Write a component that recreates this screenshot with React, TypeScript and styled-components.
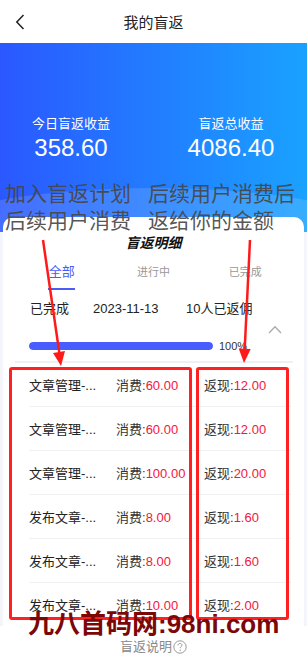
import React from "react";
import styled, { createGlobalStyle } from "styled-components";

const GlobalStyle = createGlobalStyle`
  html, body {
    margin: 0;
    padding: 0;
    background: #ffffff;
  }
  body {
    font-family: "Liberation Sans", "Noto Sans CJK SC", sans-serif;
    color: #222;
  }
`;

const Page = styled.div`
  position: relative;
  width: 307px;
  min-height: 661px;
  overflow: hidden;
  background: #ffffff;
`;

const NavBar = styled.div`
  height: 43px;
  display: flex;
  align-items: center;
  background: #ffffff;
`;

const BackButton = styled.div`
  width: 40px;
  display: flex;
  justify-content: center;
  align-items: center;
`;

const NavTitle = styled.div`
  flex: 1;
  text-align: center;
  font-size: 15px;
  color: #222;
`;

const NavSpacer = styled.div`
  width: 40px;
`;

const Hero = styled.div`
  position: relative;
  height: 189px;
  padding-top: 72px;
  box-sizing: border-box;
  background: linear-gradient(90deg, #2b58ff 0%, #2180ff 55%, #1aa2ff 100%);
  overflow: hidden;

  &::after {
    content: "";
    position: absolute;
    left: -25%;
    right: -25%;
    bottom: -52px;
    height: 96px;
    border-radius: 50%;
    background: rgba(255, 255, 255, 0.13);
  }
`;

const StatRow = styled.div`
  display: flex;
  justify-content: center;
  gap: 40px;
  padding-right: 5px;
`;

const Stat = styled.div`
  width: 120px;
  display: flex;
  flex-direction: column;
  align-items: center;
  color: #ffffff;
`;

const StatLabel = styled.div`
  font-size: 13px;
  line-height: 18px;
`;

const StatValue = styled.div`
  font-size: 24px;
  line-height: 30px;
`;

const CardWrap = styled.div`
  background: #f3f5fb;
  padding: 0 3px;
`;

const Card = styled.div`
  position: relative;
  z-index: 1;
  margin-top: -15px;
  background: #ffffff;
  border-radius: 10px 10px 0 0;
  padding-top: 16px;
`;

const CardTitle = styled.div`
  text-align: center;
  font-size: 14px;
  line-height: 20px;
  font-weight: bold;
  font-style: italic;
  color: #111;
`;

const Tabs = styled.div`
  margin-top: 9px;
  padding: 0 13px;
  display: grid;
  grid-template-columns: repeat(3, 1fr);
`;

const Tab = styled.div<{ $active?: boolean }>`
  display: flex;
  flex-direction: column;
  align-items: center;
  font-size: ${(p) => (p.$active ? "13px" : "11px")};
  line-height: 20px;
  color: ${(p) => (p.$active ? "#4b5cf6" : "#999")};

  &::after {
    content: "";
    margin-top: 6px;
    width: 27px;
    height: 2px;
    background: ${(p) => (p.$active ? "#4b5cf6" : "transparent")};
  }
`;

const InfoRow = styled.div`
  margin-top: 9px;
  display: grid;
  grid-template-columns: 63px 93px 1fr;
  padding-left: 27px;
  font-size: 13px;
  line-height: 20px;
  color: #222;
`;

const ToggleRow = styled.div`
  margin-top: 3px;
  height: 14px;
  display: flex;
  justify-content: flex-end;
  align-items: center;
  padding-right: 22px;
`;

const ProgressRow = styled.div`
  margin-top: 2px;
  height: 16px;
  display: flex;
  align-items: center;
  gap: 6px;
  padding-left: 26px;
`;

const ProgressTrack = styled.div`
  width: 184px;
  height: 8px;
  border-radius: 4px;
  background: #e6e8f5;
  overflow: hidden;
`;

const ProgressFill = styled.div`
  height: 100%;
  border-radius: 4px;
  background: #4a5cff;
`;

const ProgressText = styled.div`
  font-size: 11px;
  color: #333;
`;

const Divider = styled.div`
  margin: 7px 11px 0 12px;
  height: 2px;
  background: #eef0f5;
`;

const List = styled.div`
  padding-bottom: 0;
`;

const Row = styled.div`
  height: 43px;
  margin: 0 13px 0 26px;
  display: grid;
  grid-template-columns: 87px 88px 1fr;
  align-items: center;
  font-size: 13px;
  color: #222;
  border-bottom: 1px solid #f1f1f3;

  &:last-child {
    border-bottom: none;
  }
`;

const Name = styled.span`
  white-space: nowrap;
`;

const Money = styled.span`
  white-space: nowrap;
  color: #333;
`;

const Amount = styled.span`
  color: #f5143c;
`;

const Footer = styled.div`
  padding-top: 11px;
  display: flex;
  justify-content: center;
  align-items: center;
  gap: 1px;
  font-size: 13px;
  line-height: 20px;
  color: #888;
`;

/* --- annotation layer that sits on top of the screenshot --- */

const NoteBox = styled.div<{ $left: number; $width: number }>`
  position: absolute;
  top: 367px;
  left: ${(p) => p.$left}px;
  width: ${(p) => p.$width}px;
  height: 253px;
  box-sizing: border-box;
  border: 3px solid #ff2020;
  border-radius: 3px;
  pointer-events: none;
  z-index: 5;
`;

const NoteText = styled.div<{ $left: number }>`
  position: absolute;
  top: 180px;
  left: ${(p) => p.$left}px;
  font-size: 21px;
  line-height: 27px;
  color: rgba(70, 70, 70, 0.92);
  white-space: nowrap;
  pointer-events: none;
  z-index: 5;
`;

const ArrowLayer = styled.svg`
  position: absolute;
  inset: 0;
  pointer-events: none;
  z-index: 6;
`;

const Watermark = styled.div`
  position: absolute;
  top: 608px;
  left: 28px;
  font-size: 26px;
  line-height: 32px;
  font-weight: bold;
  color: #7a0808;
  white-space: nowrap;
  pointer-events: none;
  z-index: 7;
`;

const records = [
  { name: "文章管理-...", spend: "60.00", back: "12.00" },
  { name: "文章管理-...", spend: "60.00", back: "12.00" },
  { name: "文章管理-...", spend: "100.00", back: "20.00" },
  { name: "发布文章-...", spend: "8.00", back: "1.60" },
  { name: "发布文章-...", spend: "8.00", back: "1.60" },
  { name: "发布文章-...", spend: "10.00", back: "2.00" },
];

const App: React.FC = () => {
  const progress = 100;

  return (
    <Page>
      <GlobalStyle />
      <NavBar>
        <BackButton>
          <svg width="10" height="16" viewBox="0 0 10 16">
            <path d="M8.5 1 L1.8 8 L8.5 15" fill="none" stroke="#222" strokeWidth="1.5" />
          </svg>
        </BackButton>
        <NavTitle>我的盲返</NavTitle>
        <NavSpacer />
      </NavBar>

      <Hero>
        <StatRow>
          <Stat>
            <StatLabel>今日盲返收益</StatLabel>
            <StatValue>358.60</StatValue>
          </Stat>
          <Stat>
            <StatLabel>盲返总收益</StatLabel>
            <StatValue>4086.40</StatValue>
          </Stat>
        </StatRow>
      </Hero>

      <CardWrap>
        <Card>
          <CardTitle>盲返明细</CardTitle>
          <Tabs>
            <Tab $active>全部</Tab>
            <Tab>进行中</Tab>
            <Tab>已完成</Tab>
          </Tabs>
          <InfoRow>
            <span>已完成</span>
            <span>2023-11-13</span>
            <span>10人已返佣</span>
          </InfoRow>
          <ToggleRow>
            <svg width="14" height="9" viewBox="0 0 14 9">
              <path d="M1 8 L7 1.8 L13 8" fill="none" stroke="#aaa" strokeWidth="1.3" />
            </svg>
          </ToggleRow>
          <ProgressRow>
            <ProgressTrack>
              <ProgressFill style={{ width: `${progress}%` }} />
            </ProgressTrack>
            <ProgressText>{progress}%</ProgressText>
          </ProgressRow>
          <Divider />
          <List>
            {records.map((r, i) => (
              <Row key={i}>
                <Name>{r.name}</Name>
                <Money>
                  消费:<Amount>{r.spend}</Amount>
                </Money>
                <Money>
                  返现:<Amount>{r.back}</Amount>
                </Money>
              </Row>
            ))}
          </List>
        </Card>
      </CardWrap>

      <Footer>
        <span>盲返说明</span>
        <svg width="14" height="14" viewBox="0 0 14 14">
          <circle cx="7" cy="7" r="6.2" fill="none" stroke="#999" strokeWidth="1" />
          <path
            d="M5 5.4 C5 4.2 5.9 3.5 7 3.5 C8.1 3.5 9 4.2 9 5.2 C9 6.4 7.2 6.6 7.2 8.2"
            fill="none"
            stroke="#999"
            strokeWidth="1"
          />
          <circle cx="7.2" cy="10.2" r="0.7" fill="#999" />
        </svg>
      </Footer>

      <NoteText $left={5}>
        加入盲返计划
        <br />
        后续用户消费
      </NoteText>
      <NoteText $left={148}>
        后续用户消费后
        <br />
        返给你的金额
      </NoteText>

      <ArrowLayer width="307" height="661" viewBox="0 0 307 661">
        <line x1="43" y1="240" x2="59.5" y2="354" stroke="#ff1a1a" strokeWidth="2.5" />
        <polygon points="61,366 65,351 53,353" fill="#ff1a1a" />
        <line x1="250" y1="240" x2="244.6" y2="351" stroke="#ff1a1a" strokeWidth="2.5" />
        <polygon points="244,363 250.7,349 238.7,348.5" fill="#ff1a1a" />
      </ArrowLayer>

      <NoteBox $left={9} $width={183} />
      <NoteBox $left={196} $width={93} />

      <Watermark>九八首码网:98ni.com</Watermark>
    </Page>
  );
};

export default App;
